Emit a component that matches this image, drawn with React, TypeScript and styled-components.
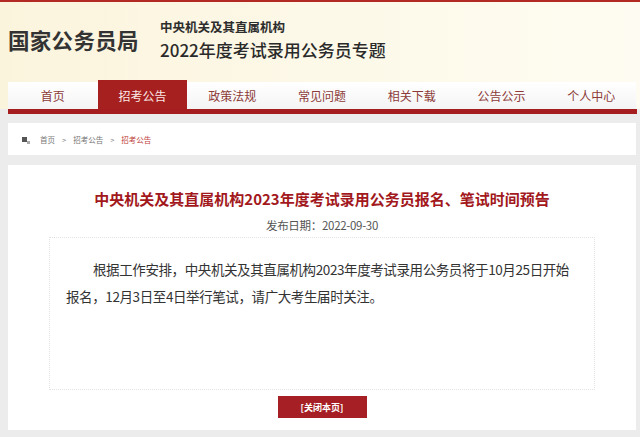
import React from 'react';
import styled, { createGlobalStyle } from 'styled-components';

const GlobalStyle = createGlobalStyle`
  html, body {
    margin: 0;
    padding: 0;
  }
  body {
    background: #ececec;
    font-family: "Noto Sans CJK SC", "Noto Sans", sans-serif;
    color: #333;
  }
`;

const Page = styled.div`
  width: 640px;
  height: 437px;
  overflow: hidden;
  background: #ececec;
`;

const Top = styled.div`
  border-top: 2px solid #b32a24;
  background: linear-gradient(90deg, #fbf4dd 0%, #fdf9e9 55%, #fefcf2 100%);
`;

const Header = styled.header`
  height: 78px;
  display: flex;
  align-items: center;
  padding-left: 8px;
`;

const Logo = styled.div`
  font-size: 21.5px;
  font-weight: 700;
  color: #333;
  letter-spacing: 0.3px;
  margin-top: -3px;
  width: 152px;
`;

const Subtitle = styled.div`
  display: flex;
  flex-direction: column;
  margin-top: -2px;
`;

const SubSmall = styled.div`
  font-size: 12.5px;
  font-weight: 700;
  line-height: 16px;
  color: #2d2d2d;
`;

const SubLarge = styled.div`
  font-size: 17px;
  font-weight: 500;
  line-height: 24px;
  color: #2a2a2a;
  margin-top: 3px;
`;

const Nav = styled.nav`
  display: flex;
  align-items: flex-end;
  height: 29px;
  margin: 0 4px 0 8px;
`;

const NavItem = styled.div<{ $active?: boolean }>`
  flex: 1;
  height: ${(p) => (p.$active ? '29px' : '27px')};
  display: flex;
  align-items: center;
  justify-content: center;
  font-size: 12px;
  color: ${(p) => (p.$active ? '#fbe9e6' : '#8c3b38')};
  background: ${(p) =>
    p.$active ? '#a6201f' : 'linear-gradient(180deg, #ffffff 0%, #f4f4f4 100%)'};
  padding-top: ${(p) => (p.$active ? '2px' : '0')};
  box-sizing: border-box;
`;

const RedBar = styled.div`
  height: 5px;
  margin: 0 3px 0 8px;
  background: #a51d1f;
`;

const Main = styled.main`
  padding: 9px 4px 0 8px;
  display: flex;
  flex-direction: column;
  gap: 10px;
`;

const Crumbs = styled.div`
  height: 32px;
  background: #fff;
  display: flex;
  align-items: center;
  padding-left: 14px;
  font-size: 7.5px;
  color: #777;
`;

const CrumbIcon = styled.span`
  position: relative;
  width: 5px;
  height: 5px;
  background: #555;
  margin-right: 13px;
  &::after {
    content: '';
    position: absolute;
    right: -3px;
    bottom: -2px;
    width: 3px;
    height: 3px;
    background: #aaa;
  }
`;

const CrumbSep = styled.span`
  margin: 0 7px;
  color: #888;
`;

const CrumbCurrent = styled.span`
  color: #c0433c;
`;

const Card = styled.section`
  height: 265px;
  background: #fff;
  display: flex;
  flex-direction: column;
  align-items: center;
  padding-top: 24px;
  box-sizing: border-box;
`;

const Title = styled.h1`
  margin: 0;
  font-size: 15px;
  line-height: 20px;
  font-weight: 700;
  color: #a2181c;
`;

const PubDate = styled.div`
  margin-top: 8px;
  font-size: 11.5px;
  letter-spacing: -0.3px;
  line-height: 16px;
  color: #555;
`;

const Article = styled.div`
  align-self: stretch;
  margin: 4px 41px 0;
  height: 153px;
  border: 1px dotted #e2e2e2;
  box-sizing: border-box;
  padding: 18px 12px 0 16px;
`;

const Para = styled.p`
  margin: 0;
  text-indent: 2em;
  font-size: 13.5px;
  letter-spacing: -0.4px;
  line-height: 27px;
  color: #333;
`;

const CloseButton = styled.button`
  margin-top: 6px;
  width: 89px;
  height: 22px;
  border: none;
  background: #a51f24;
  color: #fff;
  font-family: inherit;
  font-size: 9px;
  font-weight: 700;
  padding: 0;
  cursor: pointer;
`;

const navItems = ['首页', '招考公告', '政策法规', '常见问题', '相关下载', '公告公示', '个人中心'];

const App = () => {
  return (
    <Page>
      <GlobalStyle />
      <Top>
        <Header>
          <Logo>国家公务员局</Logo>
          <Subtitle>
            <SubSmall>中央机关及其直属机构</SubSmall>
            <SubLarge>2022年度考试录用公务员专题</SubLarge>
          </Subtitle>
        </Header>
        <Nav>
          {navItems.map((item) => (
            <NavItem key={item} $active={item === '招考公告'}>
              {item}
            </NavItem>
          ))}
        </Nav>
      </Top>
      <RedBar />
      <Main>
        <Crumbs>
          <CrumbIcon />
          <span>首页</span>
          <CrumbSep>&gt;</CrumbSep>
          <span>招考公告</span>
          <CrumbSep>&gt;</CrumbSep>
          <CrumbCurrent>招考公告</CrumbCurrent>
        </Crumbs>
        <Card>
          <Title>中央机关及其直属机构2023年度考试录用公务员报名、笔试时间预告</Title>
          <PubDate>发布日期：2022-09-30</PubDate>
          <Article>
            <Para>
              根据工作安排，中央机关及其直属机构2023年度考试录用公务员将于10月25日开始报名，12月3日至4日举行笔试，请广大考生届时关注。
            </Para>
          </Article>
          <CloseButton>[关闭本页]</CloseButton>
        </Card>
      </Main>
    </Page>
  );
};

export default App;
